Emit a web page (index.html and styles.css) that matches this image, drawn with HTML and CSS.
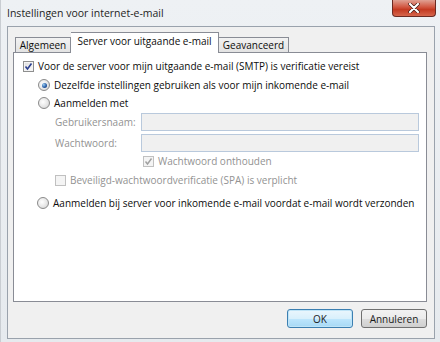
FILE: index.html
```html
<!DOCTYPE html>
<html lang="nl">

<head>
    <meta name="viewport" content="width=device-width, initial-scale=1.0">
    <link rel="stylesheet" href="styles.css">
</head>

<body>
    <div class="window">
        <div class="titlebar">
            <span class="title">Instellingen voor internet-e-mail</span>
            <span class="close">
                <svg width="12" height="10" viewBox="0 0 12 10">
                    <path d="M2 1 L10 9 M10 1 L2 9" stroke="#3a1410" stroke-width="3.4" stroke-linecap="round" />
                    <path d="M2 1 L10 9 M10 1 L2 9" stroke="#fff" stroke-width="2.2" stroke-linecap="round" />
                </svg>
            </span>
        </div>

        <div class="client">
            <div class="tabs">
                <div class="tab first">Algemeen</div>
                <div class="tab active">Server voor uitgaande e-mail</div>
                <div class="tab last">Geavanceerd</div>
            </div>

            <div class="panel">
                <div class="row row-main">
                    <span class="check">
                        <svg width="9" height="9" viewBox="0 0 9 9"><path d="M1.5 4.5 L3.5 7 L7.5 1.5" fill="none" stroke="#2a3f8f" stroke-width="1.6" /></svg>
                    </span>
                    <span>Voor de server voor mijn uitgaande e-mail (SMTP) is verificatie vereist</span>
                </div>
                <div class="row row-radio first-radio">
                    <span class="radio on"></span>
                    <span>Dezelfde instellingen gebruiken als voor mijn inkomende e-mail</span>
                </div>
                <div class="row row-radio">
                    <span class="radio"></span>
                    <span>Aanmelden met</span>
                </div>

                <div class="field field-first">
                    <label>Gebruikersnaam:</label>
                    <span class="input"></span>
                </div>
                <div class="field">
                    <label>Wachtwoord:</label>
                    <span class="input"></span>
                </div>

                <div class="row row-remember disabled">
                    <span class="check">
                        <svg width="9" height="9" viewBox="0 0 9 9"><path d="M1.5 4.5 L3.5 7 L7.5 1.5" fill="none" stroke="#a0a0a0" stroke-width="1.4" /></svg>
                    </span>
                    <span>Wachtwoord onthouden</span>
                </div>
                <div class="row row-spa disabled">
                    <span class="check"></span>
                    <span>Beveiligd-wachtwoordverificatie (SPA) is verplicht</span>
                </div>

                <div class="row row-radio last-radio">
                    <span class="radio"></span>
                    <span>Aanmelden bij server voor inkomende e-mail voordat e-mail wordt verzonden</span>
                </div>
            </div>

            <div class="buttons">
                <button class="btn default">OK</button>
                <button class="btn">Annuleren</button>
            </div>
        </div>
    </div>
</body>

</html>
```

FILE: styles.css
```css
body {
    margin: 0;
    font-family: "Open Sans", "Noto Sans", sans-serif;
    font-size: 10px;
    color: #0c0c0c;
}

.window {
    width: 440px;
    height: 342px;
    box-sizing: border-box;
    padding: 0 5px 3px 6px;
    display: flex;
    flex-direction: column;
    background: linear-gradient(180deg, #eef1f4 0%, #e6eaee 100%);
    border-left: 1px solid #c9cdd2;
}

.titlebar {
    height: 26px;
    display: flex;
    justify-content: space-between;
    align-items: flex-start;
}

.title {
    margin-top: 6px;
    font-size: 10.5px;
    color: #1e1e1e;
}

.close {
    width: 42px;
    height: 16px;
    margin-right: -1px;
    display: flex;
    align-items: center;
    justify-content: center;
    border: 1px solid #6b2a22;
    border-top: none;
    border-radius: 0 0 4px 4px;
    background: linear-gradient(180deg, #e0a193 0%, #d1553f 45%, #c33a22 60%, #d6664c 100%);
}

.client {
    flex: 1;
    border: 1px solid #9aa2ac;
    background: #f0f0f0;
    padding: 5px 7px 0 5px;
    display: flex;
    flex-direction: column;
}

.tabs {
    display: flex;
    align-items: flex-end;
    padding-left: 2px;
    height: 20px;
    position: relative;
    z-index: 1;
}

.tab {
    height: 14px;
    line-height: 14px;
    text-align: center;
    border: 1px solid #898c95;
    border-bottom: none;
    border-left: none;
    background: linear-gradient(180deg, #f2f2f2 0%, #e3e3e3 100%);
    white-space: nowrap;
}

.tab.first {
    border-left: 1px solid #898c95;
    width: 54px;
}

.tab.active {
    width: 147px;
    height: 20px;
    line-height: 17px;
    background: #fff;
    margin-bottom: -1px;
}

.tab.last {
    width: 69px;
}

.panel {
    height: 250px;
    box-sizing: border-box;
    border: 1px solid #898c95;
    background: #fff;
    padding: 4px 7px 0 9px;
}

.row {
    height: 18px;
    display: flex;
    align-items: center;
    gap: 4px;
    white-space: nowrap;
}

.row-radio {
    padding-left: 15px;
}

.first-radio {
    margin-top: 1px;
}

.last-radio {
    margin-top: 5px;
    padding-left: 14px;
}

.row-remember {
    padding-left: 120px;
}

.row-spa {
    margin-top: 1px;
    padding-left: 32px;
}

.disabled {
    color: #929292;
}

.check {
    width: 9px;
    height: 9px;
    flex: none;
    display: flex;
    align-items: center;
    justify-content: center;
    border: 1px solid #8e8f8f;
    background: linear-gradient(135deg, #dcdcdc 0%, #fbfbfb 100%);
    box-shadow: inset 0 0 0 1px #f4f4f4;
}

.disabled .check {
    border-color: #c0c0c0;
    background: #f4f4f4;
}

.radio {
    width: 10px;
    height: 10px;
    flex: none;
    border-radius: 50%;
    border: 1px solid #8a8a8a;
    background: radial-gradient(circle at 40% 40%, #ffffff 0%, #e4e4e4 60%, #c9c9c9 100%);
    display: flex;
    align-items: center;
    justify-content: center;
}

.radio.on::after {
    content: "";
    width: 5px;
    height: 5px;
    border-radius: 50%;
    background: radial-gradient(circle at 35% 35%, #9fd0f2 0%, #2a5fa8 55%, #12306e 100%);
}

.field {
    height: 18px;
    display: flex;
    align-items: center;
    padding-left: 32px;
    margin-top: 3px;
}

.field-first {
    margin-top: 1px;
}

.field label {
    width: 86px;
    flex: none;
    color: #929292;
}

.input {
    flex: 1;
    height: 16px;
    border: 1px solid #b9c9dc;
    background: #f0f0f0;
}

.buttons {
    display: flex;
    justify-content: flex-end;
    gap: 8px;
    margin-top: 7px;
}

.btn {
    width: 66px;
    height: 19px;
    padding: 0;
    font-family: inherit;
    font-size: 10px;
    color: #1b1b1b;
    border: 1px solid #707070;
    border-radius: 3px;
    background: linear-gradient(180deg, #f2f2f2 0%, #ebebeb 50%, #dddddd 51%, #cfcfcf 100%);
}

.btn.default {
    border-color: #3c7fb1;
    box-shadow: inset 0 0 0 1px #bfe4f7;
    background: linear-gradient(180deg, #eaf6fd 0%, #d9f0fc 50%, #bee6fd 51%, #a7d9f5 100%);
}
```
